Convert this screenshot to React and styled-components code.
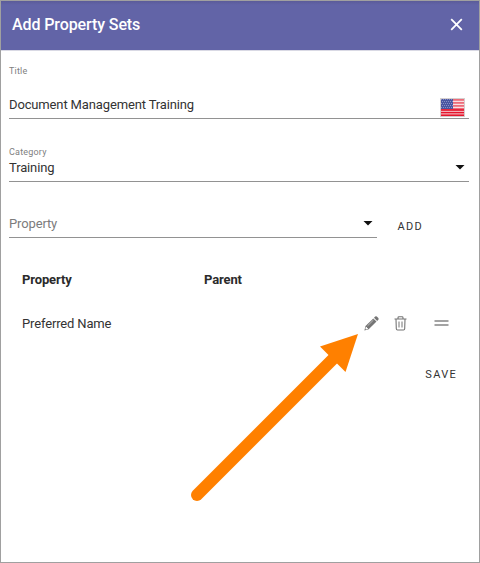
import React from "react";
import styled, { createGlobalStyle } from "styled-components";

const GlobalStyle = createGlobalStyle`
  * { box-sizing: border-box; }
  body { margin: 0; background: #fff; font-family: Roboto, sans-serif; }
`;

const Dialog = styled.main`
  position: relative;
  display: flex;
  flex-direction: column;
  width: 480px;
  height: 563px;
  border: 1px solid #a0a0a0;
  background: #fff;
  color: #333;
  font-size: 13px;
  overflow: hidden;
`;

const Header = styled.header`
  display: flex;
  flex: none;
  align-items: center;
  justify-content: space-between;
  height: 50px;
  padding: 0 15px 2px 11px;
  background: linear-gradient(#5b5b99, #6264a7 4px);
  border-bottom: 1px solid #d9d9e4;
  color: #fff;
`;

const Heading = styled.h1`
  margin: 0;
  font-size: 16px;
  line-height: 20px;
  font-weight: 500;
  letter-spacing: -0.1px;
`;

const IconButton = styled.button`
  display: flex;
  padding: 0;
  border: 0;
  background: none;
  color: inherit;
`;

const Form = styled.section`
  display: flex;
  flex-direction: column;
  padding: 0 10px 0 8px;
`;

const Field = styled.div`
  display: flex;
  flex-direction: column;
  justify-content: flex-end;
  width: ${(p) => p.$width || "100%"};
  height: ${(p) => p.$height};
  border-bottom: 1px solid #929292;
`;

const Label = styled.label`
  margin-bottom: ${(p) => p.$gap};
  color: #808080;
  font-size: 9px;
  line-height: 12px;
  letter-spacing: 0.2px;
`;

const Control = styled.div`
  display: flex;
  align-items: center;
  justify-content: space-between;
  height: ${(p) => p.$height};
  padding: 0 4px ${(p) => p.$bottom} 0;
  color: ${(p) => (p.$placeholder ? "#7c7c7c" : "#333")};
  line-height: 16px;
  letter-spacing: -0.14px;
`;

const AddRow = styled.div`
  display: flex;
  align-items: flex-end;
  height: 56px;
`;

const TextButton = styled.button`
  padding: 0;
  border: 0;
  background: none;
  color: #333;
  font: 400 11px/14px Roboto, sans-serif;
  letter-spacing: 1.3px;
`;

const AddButton = styled(TextButton)`
  margin: 0 0 4px 20.5px;
`;

const Table = styled.section`
  display: grid;
  grid-template-columns: 182px 160px 1fr;
  grid-template-rows: 44px 44px;
  align-items: center;
  padding: 19px 29px 0 21px;
`;

const ColumnTitle = styled.strong`
  font-weight: 700;
  color: #2b2b2b;
  letter-spacing: -0.12px;
`;

const Cell = styled.span`
  grid-column: span 2;
  letter-spacing: -0.15px;
`;

const Actions = styled.div`
  display: grid;
  grid-template-columns: 29.5px 40.5px 15px;
  align-items: center;
  color: #757575;
`;

const Footer = styled.footer`
  display: flex;
  justify-content: flex-end;
  padding: 23px 22px 0 0;
`;

const Flag = styled.svg`
  margin: 5px 0 0;
`;

const Pointer = styled.svg`
  position: absolute;
  left: -1px;
  top: -1px;
  pointer-events: none;
`;

const Caret = () => (
  <svg width="10" height="5" viewBox="0 0 10 5">
    <path d="M.5 0h9L5 4.5z" fill="#111" />
  </svg>
);

const UsFlag = () => (
  <Flag width="25" height="19" viewBox="0 0 25 19">
    <rect width="25" height="19" fill="#d5cfcf" />
    <rect x="1" y="1" width="23" height="17" fill="#f8dfe2" />
    {[1, 4, 7, 10].map((y) => (
      <path key={y} d={`M1 ${y + 0.9}h23`} stroke="#ed6673" strokeWidth="1.7" />
    ))}
    {[12, 14.6, 17.2].map((y) => (
      <path key={y} d={`M1 ${y}h23`} stroke="#e5152c" strokeWidth="1.7" />
    ))}
    <rect x="1" y="1" width="12" height="10" fill="#4a55a0" />
    {[1.5, 3.5, 5.5, 7.5, 9.5].map((y, i) => (
      <path key={y} d={`M${1 + (i % 2)} ${y}h11`} stroke="#8790c6" strokeDasharray="1 1" />
    ))}
  </Flag>
);

const CloseIcon = () => (
  <svg width="15" height="15" viewBox="0 0 15 15">
    <path d="M2.2 2.2l10.6 10.6M12.8 2.2L2.2 12.8" fill="none" stroke="#fff" strokeWidth="1.8" />
  </svg>
);

const PencilIcon = () => (
  <svg width="15" height="15" viewBox="0 0 15 15">
    <path d="M.4 14.4l1.1-4.3 7.8-7.7 3.2 3.2-7.8 7.7z" fill="currentColor" />
    <path d="M10 1.7L11.2.6q.8-.7 1.6 0l1.5 1.5q.7.8 0 1.6l-1.1 1.2z" fill="currentColor" />
    <path d="M3.6 9.8l5.8-5.7" stroke="#d5d5d5" strokeWidth=".7" />
    <path d="M1.8 11.1l.9-.2.4 1 .9.3-.2.8-1.8.5-.6-.6z" fill="#fff" />
  </svg>
);

const TrashIcon = () => (
  <svg width="13" height="15" viewBox="0 0 13 15" fill="none" stroke="currentColor">
    <path d="M.5 3h12M4 3V1.7q0-.9.9-.9h3.2q.9 0 .9.9V3M2 3.2l.3 9.6q.1 1.2 1.2 1.2h6q1.1 0 1.2-1.2l.3-9.6" strokeWidth="1.1" />
    <path d="M5 5.5v6M8 5.5v6" strokeWidth="1" />
  </svg>
);

const HandleIcon = () => (
  <svg width="15" height="6" viewBox="0 0 15 6">
    <path d="M.5 1h14M.5 5h14" stroke="#858585" strokeWidth="1.6" />
  </svg>
);

export default function App() {
  return (
    <>
      <GlobalStyle />
      <Dialog>
        <Header>
          <Heading>Add Property Sets</Heading>
          <IconButton aria-label="Close"><CloseIcon /></IconButton>
        </Header>
        <Form>
          <Field $height="68px">
            <Label $gap="15px">Title</Label>
            <Control $height="26px" $bottom="0px"><span>Document Management Training</span><UsFlag /></Control>
          </Field>
          <Field $height="63px">
            <Label $gap="0px">Category</Label>
            <Control $height="23px" $bottom="4px"><span>Training</span><Caret /></Control>
          </Field>
          <AddRow>
            <Field $height="28px" $width="368px">
              <Control $height="23px" $bottom="4px" $placeholder><span>Property</span><Caret /></Control>
            </Field>
            <AddButton>ADD</AddButton>
          </AddRow>
        </Form>
        <Table>
          <ColumnTitle>Property</ColumnTitle>
          <ColumnTitle>Parent</ColumnTitle>
          <span />
          <Cell>Preferred Name</Cell>
          <Actions>
            <IconButton aria-label="Edit"><PencilIcon /></IconButton>
            <IconButton aria-label="Delete"><TrashIcon /></IconButton>
            <HandleIcon />
          </Actions>
        </Table>
        <Footer><TextButton>SAVE</TextButton></Footer>
        <Pointer width="480" height="563" viewBox="0 0 480 563">
          <path d="M197 495L337 355" stroke="#ff8000" strokeWidth="12" strokeLinecap="round" />
          <path d="M358 334L320 346.5 345.5 372z" fill="#ff8000" />
        </Pointer>
      </Dialog>
    </>
  );
}
